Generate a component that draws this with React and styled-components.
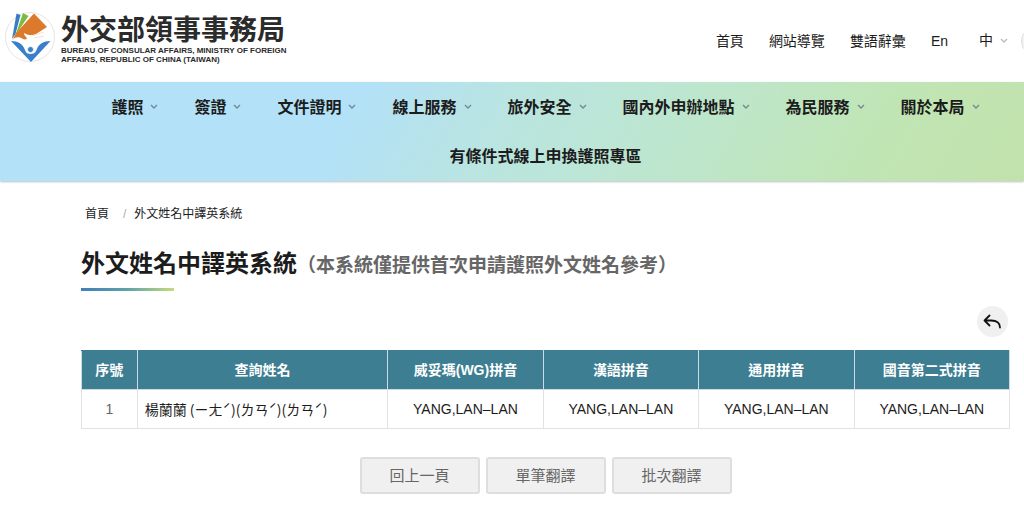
import React from "react";
import styled, { createGlobalStyle } from "styled-components";

const GlobalStyle = createGlobalStyle`
  *, *::before, *::after { box-sizing: border-box; }
  body {
    margin: 0;
    background: #fff;
    color: #1c1c1c;
    font-family: "Liberation Sans", "Noto Sans CJK TC", sans-serif;
    overflow-x: hidden;
  }
  a { color: inherit; text-decoration: none; }
`;

const Header = styled.header`
  display: flex;
  justify-content: space-between;
  height: 82px;
  padding-left: 4px;
  overflow: hidden;
`;

const Brand = styled.a`
  display: flex;
  gap: 4px;
  padding-top: 10px;
`;

const Emblem = styled.svg`
  width: 53px;
  height: 56px;
  flex: none;
`;

const BrandText = styled.span`
  display: flex;
  flex-direction: column;
  color: #2b2b2b;
  font-weight: 700;
`;

const BrandName = styled.span`
  font-family: "Noto Sans CJK TC", sans-serif;
  font-size: 28px;
  line-height: 36px;
  white-space: nowrap;
`;

const BrandEnglish = styled.span`
  font-size: 8px;
  line-height: 9px;
  white-space: nowrap;
`;

const UtilityNav = styled.nav`
  display: flex;
  gap: 25px;
  align-items: center;
  align-self: flex-start;
  height: 82px;
  font-size: 14px;
  line-height: 20px;
  white-space: nowrap;
`;

const LanguageButton = styled.button`
  display: flex;
  align-items: center;
  gap: 7px;
  margin-left: 6px;
  padding: 0 0 3px;
  border: 0;
  background: none;
  color: inherit;
  font: inherit;
`;

const SearchButton = styled.button`
  width: 30px;
  height: 30px;
  flex: none;
  margin: 0 -27px 0 -12px;
  border: 1px solid #ddd;
  border-radius: 50%;
  background: #f4f4f4;
`;

const MainNav = styled.nav`
  padding: 0 14px 1px 81px;
  background: linear-gradient(120deg, #b3e1f7 34%, #bae5df 50%, #bde6d0 64%, #c0e5b4 84%, #c2e2ac 100%);
  box-shadow: 0 1px 2px #b9bfc4;
`;

const MenuList = styled.ul`
  display: flex;
  flex-wrap: wrap;
  justify-content: center;
  margin: 0;
  padding: 0;
  list-style: none;
`;

const MenuLink = styled.a`
  display: flex;
  align-items: center;
  gap: 7px;
  height: 49px;
  padding: 0 18px 2px;
  font-size: 16px;
  font-weight: 700;
  white-space: nowrap;
`;

const ChevronIcon = styled.svg`
  width: 8px;
  height: 8px;
  fill: none;
  stroke: ${(p) => p.$tone};
  stroke-width: 1.4;
`;

const Main = styled.main`
  padding: 23px 14px 18px 81px;
`;

const Breadcrumb = styled.ol`
  display: flex;
  gap: 8px;
  margin: 0;
  padding: 0 4px;
  list-style: none;
  font-size: 12px;
  line-height: 20px;
`;

const Crumb = styled.li`
  & + &::before {
    content: "/";
    margin: 0 8px 0 6px;
    color: #aaa;
  }
`;

const Title = styled.h1`
  margin: 22px 0 0;
  font-size: 24px;
  line-height: 36px;
  font-weight: 700;
  white-space: nowrap;

  &::after {
    content: "";
    display: block;
    width: 93px;
    height: 3px;
    margin-top: 4px;
    background: linear-gradient(90deg, #3f7fb8, #5fa3a8 50%, #c5dc7c);
  }
`;

const TitleNote = styled.small`
  color: #666;
  font-size: 19px;
`;

const Toolbar = styled.div`
  display: flex;
  justify-content: flex-end;
  padding: 15px 2px 13px;
`;

const BackButton = styled.button`
  display: grid;
  place-items: center;
  width: 31px;
  height: 31px;
  padding: 0;
  border: 0;
  border-radius: 50%;
  background: #f0f0f0;
  color: #111;
`;

const ResultTable = styled.table`
  width: 100%;
  table-layout: fixed;
  border-collapse: collapse;
  font-size: 14px;
  line-height: 20px;
`;

const HeadCell = styled.th`
  width: ${(p) => p.$width || "auto"};
  height: 39px;
  padding: 0;
  border: 1px solid #c9dde2;
  border-top-color: #3d7e92;
  background: #3d7e92;
  color: #fff;
  font-weight: 700;
`;

const Cell = styled.td`
  height: 39px;
  padding: 0 7px;
  border: 1px solid #e2e2e2;
  color: ${(p) => (p.$muted ? "#666" : "inherit")};
  text-align: center;
`;

const NameCell = styled(Cell)`
  font-family: "Noto Sans CJK TC", sans-serif;
  text-align: left;
`;

const Actions = styled.div`
  display: flex;
  justify-content: center;
  gap: 6px;
  margin-top: 28px;
`;

const ActionButton = styled.button`
  width: 120px;
  height: 37px;
  padding: 0 0 2px;
  border: 2px solid #dedede;
  border-radius: 3px;
  background: #f0f0f0;
  color: #666;
  font: inherit;
  font-size: 15px;
`;

function Chevron({ tone }) {
  return (
    <ChevronIcon viewBox="0 0 8 8" $tone={tone} aria-hidden="true">
      <path d="M1 3l3 3 3-3" />
    </ChevronIcon>
  );
}

const menu = ["護照", "簽證", "文件證明", "線上服務", "旅外安全", "國內外申辦地點", "為民服務", "關於本局"];

const columns = [
  { label: "序號", width: "6%" },
  { label: "查詢姓名", width: "27%" },
  { label: "威妥瑪(WG)拼音" },
  { label: "漢語拼音" },
  { label: "通用拼音" },
  { label: "國音第二式拼音" },
];

const rows = [
  {
    name: "楊蘭蘭 (ㄧㄤˊ)(ㄌㄢˊ)(ㄌㄢˊ)",
    spellings: ["YANG,LAN–LAN", "YANG,LAN–LAN", "YANG,LAN–LAN", "YANG,LAN–LAN"],
  },
];

export default function App() {
  return (
    <>
      <GlobalStyle />
      <Header>
        <Brand href="#">
          <Emblem viewBox="0 0 53 56" aria-hidden="true">
            <circle cx="26" cy="27" r="24.5" fill="#fff" stroke="#e8e4e0" />
            <path d="M12.500 3.500l4 1.500-5 19-3.500 5z" fill="#3a7cc0" />
            <path d="M19 3l5.500 3-13 19z" fill="#7cbb42" />
            <path d="M30 3.500L43 17 35 32 8 31l4-8z" fill="#dc7a2c" />
            <path d="M7 32c2-5 8-6 12-3 2 1 4 0 4-1-2-2-3-3-3-5 3 2 8 3 12 1l11-7c0 4-1 6-2 8h3c-1 4-4 5-7 7-3 3-7 5-11 5-7 0-12-5-19-5z" fill="#fff" />
            <path d="M28 26l12-4M30 28l10-2" fill="none" stroke="#f0cdb0" strokeWidth=".6" />
            <path d="M7 31c7 0 12 3 14 9 1 3 3 4 5.500 4s5-1 6-4c2-6 7-9 14-9L27 52z" fill="#3a7fca" />
            <circle cx="26.500" cy="39.500" r="3" fill="#3a7fca" stroke="#fff" strokeWidth=".8" />
          </Emblem>
          <BrandText>
            <BrandName>外交部領事事務局</BrandName>
            <BrandEnglish>BUREAU OF CONSULAR AFFAIRS, MINISTRY OF FOREIGN</BrandEnglish>
            <BrandEnglish>AFFAIRS, REPUBLIC OF CHINA (TAIWAN)</BrandEnglish>
          </BrandText>
        </Brand>
        <UtilityNav>
          <a href="#">首頁</a>
          <a href="#">網站導覽</a>
          <a href="#">雙語辭彙</a>
          <a href="#">En</a>
          <LanguageButton type="button">
            中<Chevron tone="#bbb" />
          </LanguageButton>
          <SearchButton type="button" aria-label="搜尋" />
        </UtilityNav>
      </Header>
      <MainNav>
        <MenuList>
          {menu.map((label) => (
            <li key={label}>
              <MenuLink href="#">
                {label}
                <Chevron tone="#75898f" />
              </MenuLink>
            </li>
          ))}
          <li>
            <MenuLink href="#">有條件式線上申換護照專區</MenuLink>
          </li>
        </MenuList>
      </MainNav>
      <Main>
        <Breadcrumb>
          <Crumb>
            <a href="#">首頁</a>
          </Crumb>
          <Crumb>
            <a href="#">外文姓名中譯英系統</a>
          </Crumb>
        </Breadcrumb>
        <Title>
          外文姓名中譯英系統
          <TitleNote>（本系統僅提供首次申請護照外文姓名參考）</TitleNote>
        </Title>
        <Toolbar>
          <BackButton type="button" aria-label="返回">
            <svg width="19" height="17" viewBox="0 0 19 17" fill="none" stroke="currentColor" strokeWidth="1.8" strokeLinecap="round" strokeLinejoin="round">
              <path d="M6.500 2.500L1.500 7.500l5 5M1.500 7.500h7c5 0 8.500 2.500 8.500 7" />
            </svg>
          </BackButton>
        </Toolbar>
        <ResultTable>
          <thead>
            <tr>
              {columns.map((c) => (
                <HeadCell key={c.label} scope="col" $width={c.width}>
                  {c.label}
                </HeadCell>
              ))}
            </tr>
          </thead>
          <tbody>
            {rows.map((row, i) => (
              <tr key={row.name}>
                <Cell $muted>{i + 1}</Cell>
                <NameCell>{row.name}</NameCell>
                {row.spellings.map((s, j) => (
                  <Cell key={j}>{s}</Cell>
                ))}
              </tr>
            ))}
          </tbody>
        </ResultTable>
        <Actions>
          <ActionButton type="button">回上一頁</ActionButton>
          <ActionButton type="button">單筆翻譯</ActionButton>
          <ActionButton type="button">批次翻譯</ActionButton>
        </Actions>
      </Main>
    </>
  );
}
